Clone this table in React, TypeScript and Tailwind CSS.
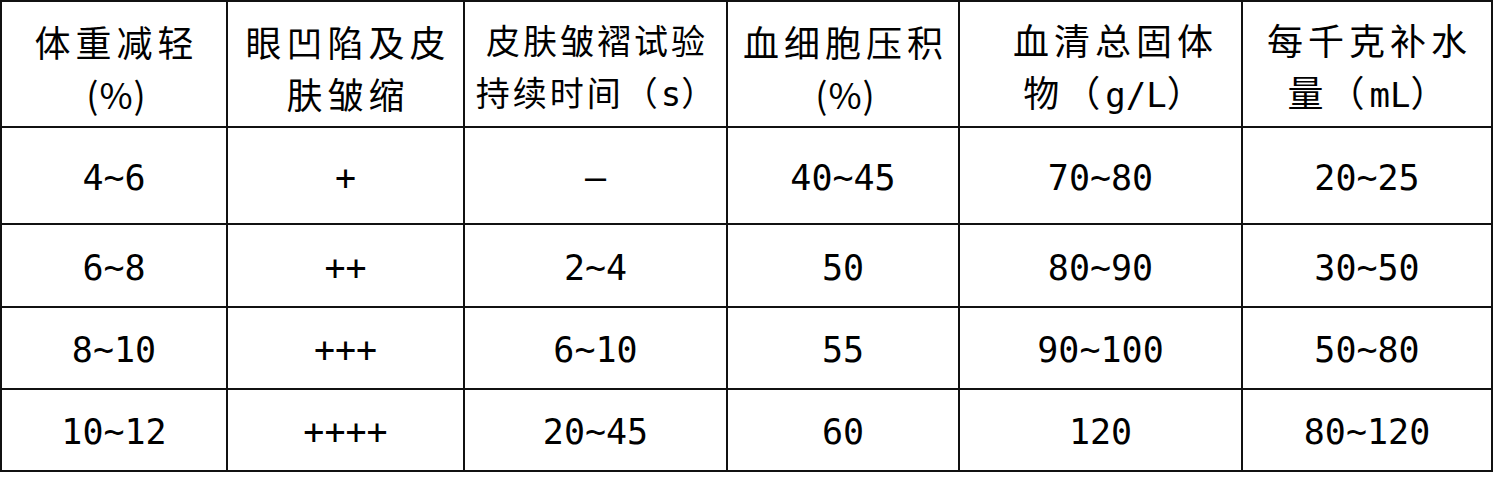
import React from "react";

const mono = "font-['DejaVu_Sans_Mono','Liberation_Mono',monospace]";
const cjk = "font-['Noto_Sans_CJK_SC','Noto_Sans',sans-serif]";

const M = ({ children }: { children: React.ReactNode }) => (
  <span className={`${mono} tracking-normal text-[34px]`}>{children}</span>
);

const P = () => <span className="tracking-[1px]">(%)</span>;

const headers: { lines: React.ReactNode[]; cls: string }[] = [
  { lines: [<>体重减轻</>, <P />], cls: "pl-[5px] text-[36px] tracking-[5px]" },
  { lines: [<>眼凹陷及皮</>, <>肤皱缩</>], cls: "pl-[5px] text-[36px] tracking-[5px]" },
  { lines: [<>皮肤皱褶试验</>, <>持续时间（<M>s</M>）</>], cls: "pl-[3px] text-[34px] tracking-[3px]" },
  { lines: [<>血细胞压积</>, <P />], cls: "pl-[5px] text-[36px] tracking-[5px]" },
  { lines: [<>血清总固体</>, <>物（<M>g/L</M>）</>], cls: "pl-[30px] text-[36px] tracking-[5px]" },
  { lines: [<>每千克补水</>, <>量（<M>mL</M>）</>], cls: "pl-[5px] text-[36px] tracking-[5px]" },
];

const rows = [
  ["4~6", "+", "–", "40~45", "70~80", "20~25"],
  ["6~8", "++", "2~4", "50", "80~90", "30~50"],
  ["8~10", "+++", "6~10", "55", "90~100", "50~80"],
  ["10~12", "++++", "20~45", "60", "120", "80~120"],
];

const rowHeights = ["h-[97px]", "h-[83px]", "h-[82px]", "h-[82px]"];

export default function App() {
  return (
    <div className="w-[1498px] h-[480px] bg-white text-black">
      <div className="grid grid-cols-[226px_237px_263px_232px_283px_250px] w-fit border-l-2 border-t-2 border-[#111]">
        {headers.map((h, i) => (
          <div
            key={"h" + i}
            className={`h-[126px] border-r-2 border-b-2 border-[#111] flex flex-col items-center justify-center ${cjk} leading-[52px] pt-[6px] ${h.cls}`}
          >
            <div className="whitespace-nowrap">{h.lines[0]}</div>
            <div className="whitespace-nowrap">{h.lines[1]}</div>
          </div>
        ))}
        {rows.map((r, ri) =>
          r.map((c, ci) => (
            <div
              key={ri + "-" + ci}
              className={`${rowHeights[ri]} border-r-2 border-b-2 border-[#111] flex items-center justify-center ${mono} text-[35px] pt-[5px]`}
            >
              {c}
            </div>
          ))
        )}
      </div>
    </div>
  );
}
